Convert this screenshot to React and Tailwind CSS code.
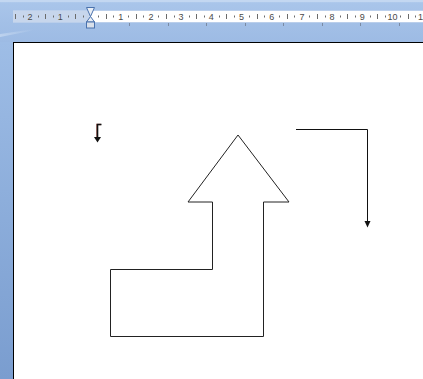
import React from "react";

const ZERO = 90.5;
const CM = 30.2;

function Ruler() {
  const nums = [];
  for (let n = -2; n <= 11; n++) {
    if (n === 0) continue;
    nums.push({ x: ZERO + n * CM, label: String(Math.abs(n)) });
  }
  const marks = [];
  for (let n = -3; n <= 11; n++) {
    [0.25, 0.5, 0.75].forEach((f) => {
      const x = ZERO + (n + f) * CM;
      if (x > 14 && x < 423 && !(x > 85 && x < 96)) marks.push({ x, half: f === 0.5 });
    });
  }
  const tabs = [];
  for (let i = 1; i <= 9; i++) tabs.push(ZERO + i * 38.5);
  return (
    <svg width="423" height="42" className="block">
      <defs>
        <linearGradient id="hdr" x1="0" y1="0" x2="0" y2="1">
          <stop offset="0" stopColor="#bcd2ef" />
          <stop offset="0.08" stopColor="#a9c5ea" />
          <stop offset="0.5" stopColor="#a3c0e7" />
          <stop offset="1" stopColor="#9dbbe4" />
        </linearGradient>
        <linearGradient id="swoosh" x1="0" y1="1" x2="1" y2="0">
          <stop offset="0" stopColor="#c4d7f0" stopOpacity="0.9" />
          <stop offset="1" stopColor="#c4d7f0" stopOpacity="0" />
        </linearGradient>
      </defs>
      <rect x="0" y="0" width="423" height="42" fill="url(#hdr)" />
      <rect x="0" y="0" width="423" height="2" fill="#c3d7f1" />
      <polygon points="0,37 0,34 34,29 30,31" fill="url(#swoosh)" />
      <rect x="13" y="10.5" width="410" height="12" fill="#d2def0" />
      <rect x="13" y="11" width="77" height="11" fill="#c7d6ec" />
      <rect x="90" y="11" width="333" height="11" fill="#ffffff" />
      {marks.map((m, i) =>
        m.half ? (
          <rect key={i} x={Math.round(m.x)} y="14" width="1" height="5" fill="#6b6b6b" />
        ) : (
          <rect key={i} x={Math.round(m.x)} y="15.5" width="1" height="2" fill="#6b6b6b" />
        )
      )}
      {nums.map((n, i) => (
        <text
          key={i}
          x={n.x}
          y="19.5"
          textAnchor="middle"
          fontSize="9"
          fill="#4a4a4a"
          fontFamily="Liberation Sans, Arial, sans-serif"
        >
          {n.label}
        </text>
      ))}
      {tabs.map((x, i) => (
        <rect key={i} x={Math.round(x)} y="23" width="1" height="3" fill="#7a8aa3" />
      ))}
      <polygon points="86.5,7.5 94.5,7.5 90.5,16.5" fill="#e9eef5" stroke="#4a72ad" strokeWidth="1" />
      <polygon points="90.5,16.5 94.5,22 86.5,22" fill="#e9eef5" stroke="#4a72ad" strokeWidth="1" />
      <rect x="86.5" y="22" width="8" height="6" fill="#d9e0ea" stroke="#4a72ad" strokeWidth="1" />
    </svg>
  );
}

function Shapes() {
  return (
    <svg width="423" height="379" className="absolute left-[-14px] top-[-43px] block">
      <polyline
        points="101.5,124.5 97.5,124.5 97.5,137"
        fill="none"
        stroke="#8a1a10"
        strokeWidth="1.5"
        transform="translate(-0.6,0)"
        opacity="0.6"
      />
      <polyline points="101.5,124.5 97.5,124.5 97.5,137" fill="none" stroke="#111" strokeWidth="1.6" />
      <polygon points="94,137 101,137 97.5,142.5" fill="#111" />
      <polygon
        points="238,135 289,202 263.5,202 263.5,336.5 110.5,336.5 110.5,269.5 212.5,269.5 212.5,202 188,202"
        fill="#ffffff"
        stroke="#222"
        strokeWidth="1"
      />
      <polyline points="296,129.5 367.5,129.5 367.5,222" fill="none" stroke="#111" strokeWidth="1" />
      <polygon points="364.5,221 370.5,221 367.5,227.5" fill="#111" />
    </svg>
  );
}

export default function App() {
  return (
    <div className="w-[423px] h-[379px] overflow-hidden flex flex-col bg-[#a5c2e8] font-['Liberation_Sans',Arial,sans-serif]">
      <div className="h-[42px] shrink-0">
        <Ruler />
      </div>
      <div className="flex flex-1 min-h-0">
        <div className="w-[13px] shrink-0 bg-gradient-to-b from-[#9ebde6] to-[#7a9dcf]" />
        <div className="flex-1 relative bg-white border-l border-t border-black overflow-hidden">
          <Shapes />
        </div>
      </div>
    </div>
  );
}
